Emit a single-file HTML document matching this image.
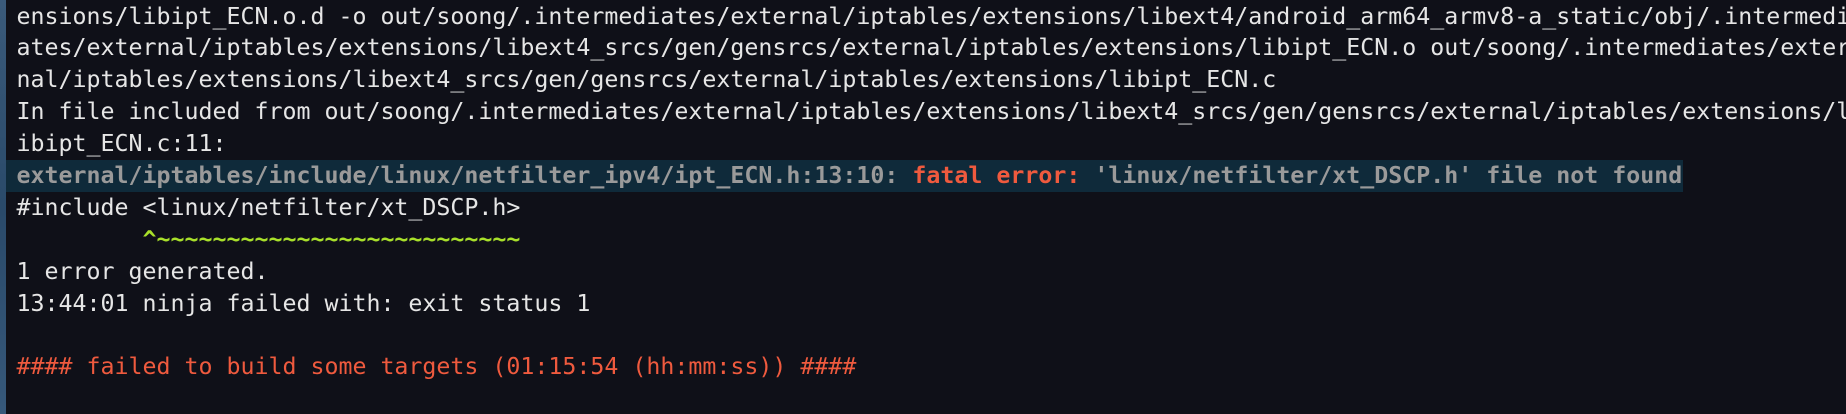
<!DOCTYPE html>
<html><head><meta charset="utf-8"><style>
html,body{margin:0;padding:0;}
body{width:1846px;height:414px;overflow:hidden;background:#0f1018;position:relative;}
.strip{position:absolute;left:0;top:0;width:6px;height:414px;background:linear-gradient(#3a5a7a,#2a4a6a 50%,#36587a);}
.t{position:absolute;left:16.5px;top:0.5px;font-family:"DejaVu Sans Mono","Liberation Mono",monospace;font-size:23.25px;line-height:31.9px;color:#e6e6e6;}
.l{height:31.9px;white-space:pre;}
.band{position:absolute;left:6px;top:160px;width:1677px;height:32px;background:#0f2a3a;}
.g{color:#9a9a9a;font-weight:bold;}
.r{color:#ef5a3e;font-weight:bold;}
.rr{color:#ef5a3e;}
.gr{color:#a8e02a;font-weight:bold;}
</style></head><body>
<div class="strip"></div>
<div class="band"></div>
<div class="t"><div class="l">ensions/libipt_ECN.o.d -o out/soong/.intermediates/external/iptables/extensions/libext4/android_arm64_armv8-a_static/obj/.intermedi</div><div class="l">ates/external/iptables/extensions/libext4_srcs/gen/gensrcs/external/iptables/extensions/libipt_ECN.o out/soong/.intermediates/exter</div><div class="l">nal/iptables/extensions/libext4_srcs/gen/gensrcs/external/iptables/extensions/libipt_ECN.c</div><div class="l">In file included from out/soong/.intermediates/external/iptables/extensions/libext4_srcs/gen/gensrcs/external/iptables/extensions/l</div><div class="l">ibipt_ECN.c:11:</div><div class="l"><span class="g">external/iptables/include/linux/netfilter_ipv4/ipt_ECN.h:13:10: </span><span class="r">fatal error: </span><span class="g">'linux/netfilter/xt_DSCP.h' file not found</span></div><div class="l">#include &lt;linux/netfilter/xt_DSCP.h&gt;</div><div class="l"><span class="gr">         ^~~~~~~~~~~~~~~~~~~~~~~~~~~</span></div><div class="l">1 error generated.</div><div class="l">13:44:01 ninja failed with: exit status 1</div><div class="l"> </div><div class="l"><span class="rr">#### failed to build some targets (01:15:54 (hh:mm:ss)) ####</span></div></div>
</body></html>
